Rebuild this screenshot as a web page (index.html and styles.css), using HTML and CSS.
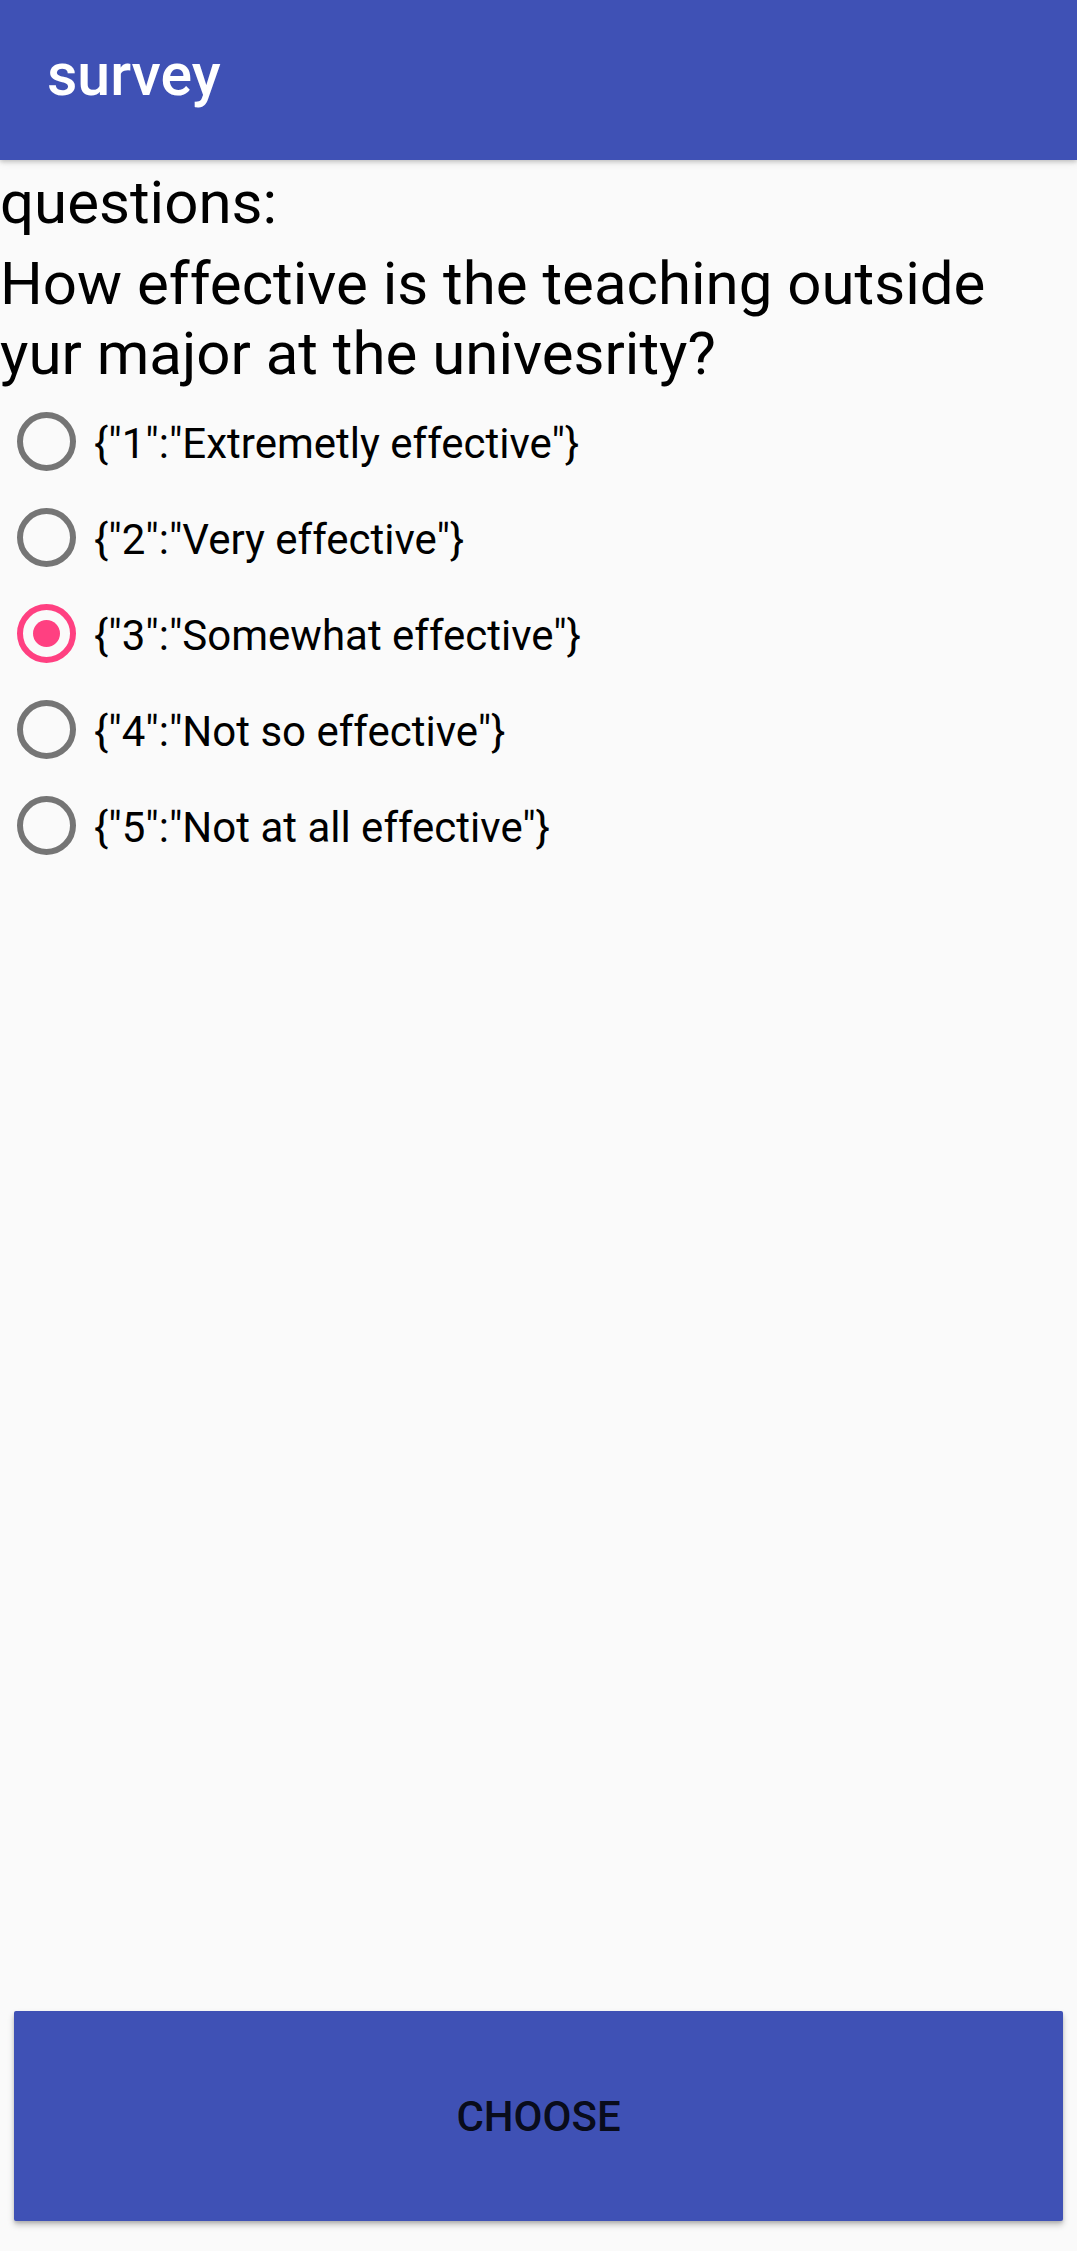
FILE: index.html
```html
<!DOCTYPE html>
<html lang="en">
<head>
<meta charset="utf-8">
<title>survey</title>
<link rel="stylesheet" href="styles.css">
</head>
<body>
<div class="screen">
  <header class="appbar">
    <h1 class="appbar-title">survey</h1>
  </header>
  <main class="content">
    <p class="label">questions:</p>
    <p class="question">How effective is the teaching outside yur major at the univesrity?</p>
    <div class="options" role="radiogroup">
      <div class="option"><span class="radio"></span><span class="option-text">{"1":"Extremetly effective"}</span></div>
      <div class="option"><span class="radio"></span><span class="option-text">{"2":"Very effective"}</span></div>
      <div class="option"><span class="radio radio-checked"></span><span class="option-text">{"3":"Somewhat effective"}</span></div>
      <div class="option"><span class="radio"></span><span class="option-text">{"4":"Not so effective"}</span></div>
      <div class="option"><span class="radio"></span><span class="option-text">{"5":"Not at all effective"}</span></div>
    </div>
  </main>
  <div class="actions">
    <button class="choose-btn" type="button">CHOOSE</button>
  </div>
</div>
</body>
</html>
```

FILE: styles.css
```css
* { box-sizing: border-box; }

html, body {
  margin: 0;
  padding: 0;
  background: #fafafa;
}

body {
  font-family: Roboto, "Noto Sans", "Liberation Sans", sans-serif;
  color: #000;
}

.screen {
  display: flex;
  flex-direction: column;
  min-height: 2251px;
}

.appbar {
  height: 160px;
  background: #3f51b5;
  display: flex;
  align-items: center;
  padding: 0 0 10px 47px;
  box-shadow: 0 2px 4px rgba(0, 0, 0, 0.18), 0 4px 8px rgba(0, 0, 0, 0.06);
  position: relative;
  z-index: 1;
}

.appbar-title {
  margin: 0;
  font-size: 59px;
  font-weight: 500;
  color: #fff;
  line-height: 70px;
}

.content {
  padding-top: 6px;
  flex: 1;
}

.label {
  margin: 0;
  font-size: 60px;
  line-height: 74px;
  font-weight: 400;
}

.question {
  margin: 8.5px 0 0 0;
  font-size: 60px;
  line-height: 70px;
  font-weight: 400;
}

.options {
  margin-top: 4.5px;
  display: flex;
  flex-direction: column;
}

.option {
  height: 96px;
  display: flex;
  align-items: center;
  padding-left: 17px;
  gap: 18px;
}

.radio {
  width: 59px;
  height: 59px;
  border: 6px solid #757575;
  border-radius: 50%;
  display: flex;
  align-items: center;
  justify-content: center;
  flex: none;
}

.radio-checked {
  border-color: #ff4081;
}

.radio-checked::after {
  content: "";
  width: 27px;
  height: 27px;
  border-radius: 50%;
  background: #ff4081;
}

.option-text {
  font-size: 42px;
  line-height: 49px;
  padding-top: 4px;
  color: #000;
}

.actions {
  padding: 0 14px 30px 14px;
}

.choose-btn {
  display: block;
  width: 100%;
  height: 210px;
  border: 0;
  border-radius: 2px;
  background: #3f51b5;
  color: rgba(0, 0, 0, 0.87);
  font-family: Roboto, "Noto Sans", "Liberation Sans", sans-serif;
  font-size: 42px;
  font-weight: 500;
  letter-spacing: 0;
  box-shadow: 0 4px 6px rgba(0, 0, 0, 0.22), 0 2px 3px rgba(0, 0, 0, 0.12);
  padding: 0;
}
```
